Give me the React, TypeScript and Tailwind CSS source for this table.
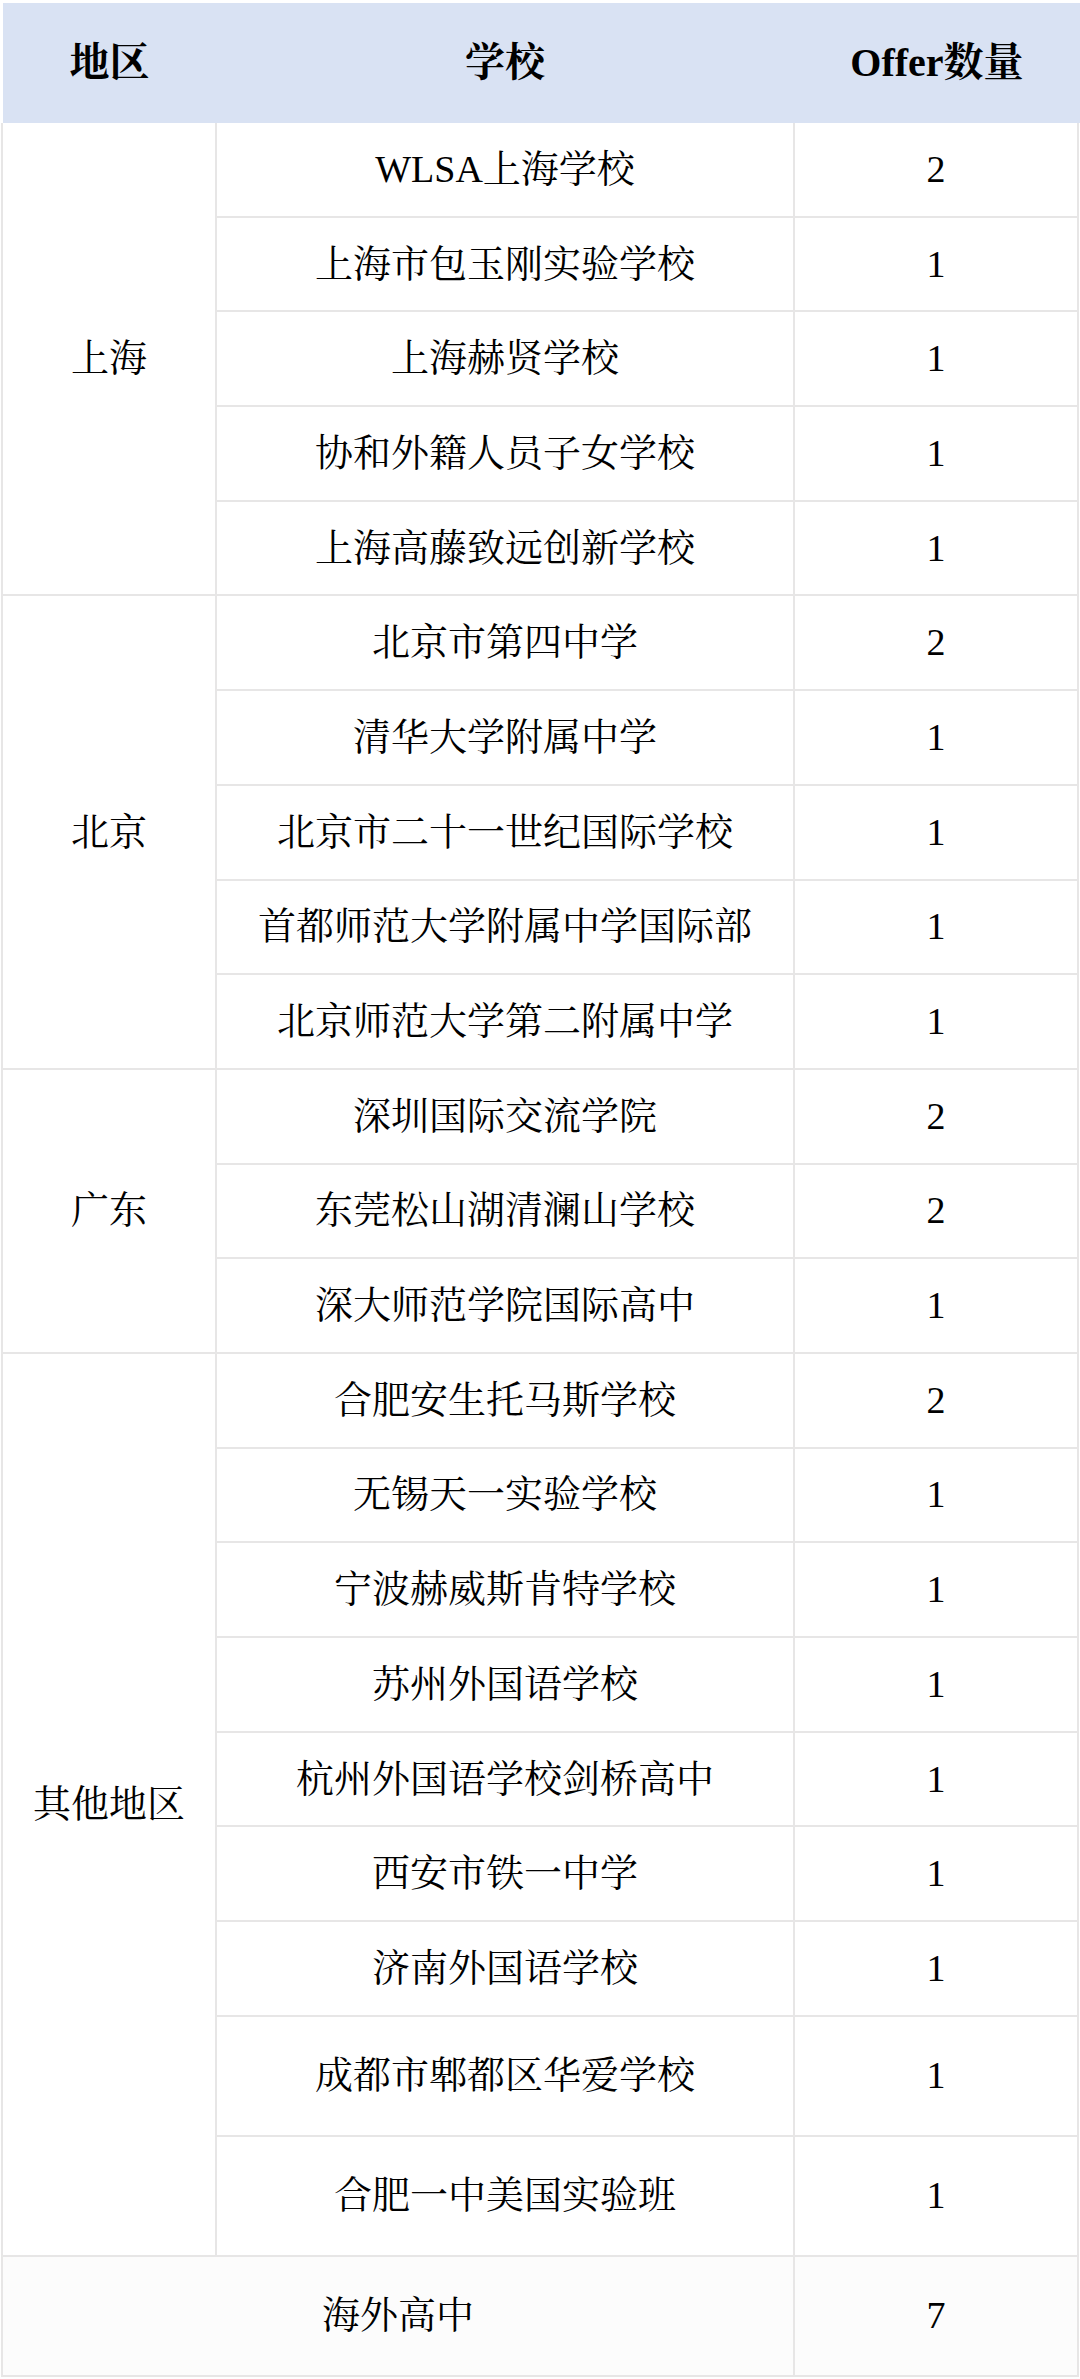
const groups = [
  {
    region: '上海',
    schools: [
      ['WLSA上海学校', 2],
      ['上海市包玉刚实验学校', 1],
      ['上海赫贤学校', 1],
      ['协和外籍人员子女学校', 1],
      ['上海高藤致远创新学校', 1],
    ],
  },
  {
    region: '北京',
    schools: [
      ['北京市第四中学', 2],
      ['清华大学附属中学', 1],
      ['北京市二十一世纪国际学校', 1],
      ['首都师范大学附属中学国际部', 1],
      ['北京师范大学第二附属中学', 1],
    ],
  },
  {
    region: '广东',
    schools: [
      ['深圳国际交流学院', 2],
      ['东莞松山湖清澜山学校', 2],
      ['深大师范学院国际高中', 1],
    ],
  },
  {
    region: '其他地区',
    schools: [
      ['合肥安生托马斯学校', 2],
      ['无锡天一实验学校', 1],
      ['宁波赫威斯肯特学校', 1],
      ['苏州外国语学校', 1],
      ['杭州外国语学校剑桥高中', 1],
      ['西安市铁一中学', 1],
      ['济南外国语学校', 1],
      ['成都市郫都区华爱学校', 1, true],
      ['合肥一中美国实验班', 1, true],
    ],
  },
] as { region: string; schools: [string, number, boolean?][] }[];

export default function App() {
  return (
    <div className="w-[1080px] min-h-[2379px] bg-white pt-[3px] text-black font-['Liberation_Serif','Noto_Serif_CJK_SC','Noto_Sans_CJK_SC',serif]">
      {/* header */}
      <div className="ml-[3px] flex h-[120px] w-[1077px] items-center bg-[#d9e2f3] text-[40px] font-bold">
        <div className="flex w-[213px] justify-center">地区</div>
        <div className="flex w-[578px] justify-center">学校</div>
        <div className="flex flex-1 justify-center">Offer数量</div>
      </div>

      {/* body */}
      <div className="ml-[1px] text-[38px]">
        {groups.map((g) => (
          <div key={g.region} className="flex">
            <div className="flex w-[216px] items-center justify-center border-b-2 border-l-2 border-r-2 border-[#e7e6e6]">
              {g.region}
            </div>
            <div className="flex flex-col">
              {g.schools.map(([name, count, tall]) => (
                <div key={name} className={tall ? 'flex h-[120px]' : 'flex h-[94.7px]'}>
                  <div className="flex w-[578px] items-center justify-center border-b-2 border-r-2 border-[#e7e6e6]">
                    {name}
                  </div>
                  <div className="flex w-[284px] items-center justify-center border-b-2 border-r-2 border-[#e7e6e6]">
                    {count}
                  </div>
                </div>
              ))}
            </div>
          </div>
        ))}
        <div className="flex h-[120px]">
          <div className="flex w-[794px] items-center justify-center border-b-2 border-l-2 border-r-2 border-[#e7e6e6] bg-[#fcfcfc]">
            海外高中
          </div>
          <div className="flex w-[284px] items-center justify-center border-b-2 border-r-2 border-[#e7e6e6] bg-[#fcfcfc]">
            7
          </div>
        </div>
      </div>
    </div>
  );
}
